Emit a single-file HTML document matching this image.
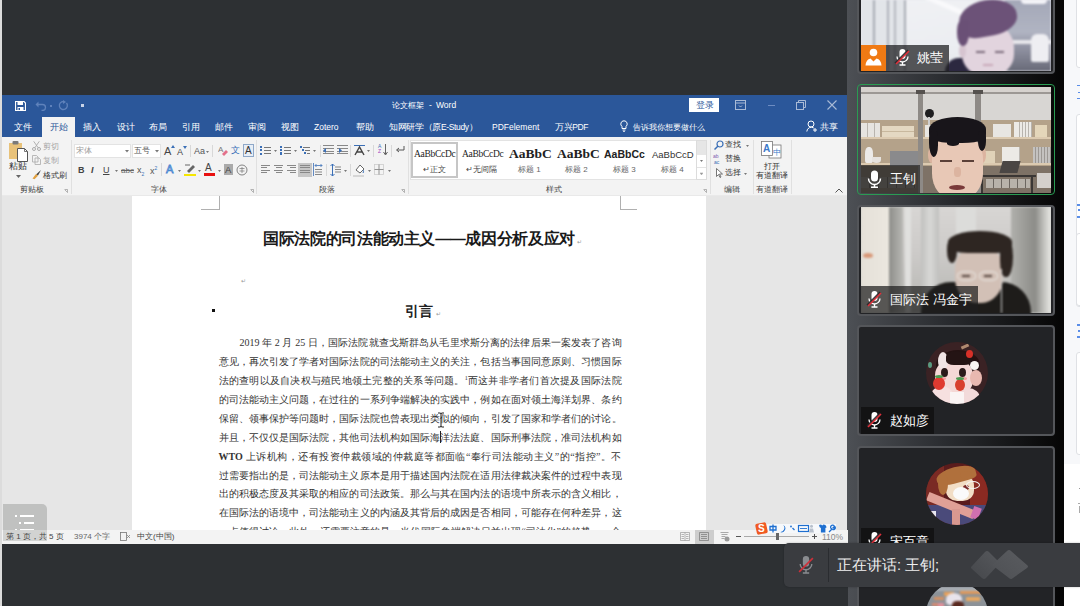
<!DOCTYPE html>
<html><head><meta charset="utf-8">
<style>
*{margin:0;padding:0;box-sizing:border-box}
html,body{width:1080px;height:606px;overflow:hidden;background:#2d3033;font-family:"Liberation Sans",sans-serif;position:relative}
.a{position:absolute}
.t{position:absolute;white-space:nowrap;line-height:1}
#leftstrip{left:0;top:0;width:2px;height:606px;background:#dcdcdc}
#topdark{left:2px;top:0;width:845px;height:95px;background:#2d3033}
#title{left:2px;top:95px;width:846px;height:42px;background:#2b579a}
#ribbon{left:2px;top:137px;width:846px;height:59px;background:#f3f3f3;border-bottom:1px solid #e9e9e9}
#docbg{left:2px;top:196px;width:846px;height:334px;background:#e6e6e6}
#page{left:132px;top:196px;width:574px;height:334px;background:#fff}
#status{left:2px;top:530px;width:846px;height:14px;background:#f3f3f3;z-index:5}
#botdark{left:2px;top:544px;width:846px;height:62px;background:#2d3033;z-index:5}
#panel{left:847px;top:0;width:217px;height:606px;background:linear-gradient(90deg,#4d5055 0%,#2a2c30 45%,#050505 100%)}
#rstrip{left:1064px;top:0;width:16px;height:606px;background:#f7f8fa}
.wt{color:#fff;font-size:9px}
.rt{color:#333;font-size:8px}
.tile{position:absolute;border:2.5px solid #54565a;border-radius:4px;background:#222326;overflow:hidden}
.jl{position:absolute;white-space:nowrap;font-family:"Liberation Serif",serif;font-size:10px;line-height:12px;height:12px;color:#333;text-align:justify;text-align-last:justify}
.jl sup{font-size:6px;vertical-align:4px;line-height:0}
</style></head><body>
<div id="leftstrip" class="a"></div>
<div id="topdark" class="a"></div>
<div id="title" class="a"></div>
<div id="ribbon" class="a"></div>
<div id="docbg" class="a"></div>
<div id="page" class="a"></div>
<div id="status" class="a"></div>
<div id="botdark" class="a"></div>
<div id="panel" class="a"></div>
<div id="rstrip" class="a"></div>

<!-- title bar -->
<svg class="a" style="left:15px;top:101px" width="11" height="10" viewBox="0 0 11 10"><path d="M0.5 0.5h8.5l1.5 1.5v7.5h-10z" fill="none" stroke="#fff" stroke-width="1.2"/><rect x="2.5" y="1" width="5.5" height="3" fill="#fff"/><rect x="2.5" y="6" width="6" height="3.5" fill="#fff"/><rect x="3.5" y="7" width="1.5" height="2" fill="#2b579a"/></svg>
<svg class="a" style="left:35px;top:100px" width="12" height="11" viewBox="0 0 12 11"><path d="M2 4.5h5.5a3 3 0 0 1 0 6h-1" fill="none" stroke="#5f82bb" stroke-width="1.3"/><path d="M0.5 4.5l3-3v6z" fill="#5f82bb"/></svg>
<div class="a" style="left:50px;top:105px;width:2px;height:2px;background:#5f82bb"></div>
<svg class="a" style="left:58px;top:100px" width="11" height="11" viewBox="0 0 11 11"><path d="M8.5 3a4 4 0 1 1-3-1.5" fill="none" stroke="#5f82bb" stroke-width="1.3"/><path d="M5 0v4l3-2z" fill="#5f82bb"/></svg>
<div class="a" style="left:81px;top:104px;width:3px;height:3px;background:#c9d4e8"></div>
<div class="t wt" style="left:392px;top:101px;font-size:8.3px;color:#fff">论文框架</div><div class="t wt" style="left:429px;top:101px;font-size:8.5px;color:#fff">-</div><div class="t wt" style="left:436px;top:101px;font-size:8.5px;color:#fff">Word</div>
<div class="a" style="left:689px;top:98px;width:30px;height:14px;background:#fff"></div>
<div class="t" style="left:696px;top:101px;font-size:8.5px;color:#2b579a">登录</div>
<svg class="a" style="left:735px;top:100px" width="11" height="10" viewBox="0 0 11 10"><rect x="0.5" y="0.5" width="10" height="9" fill="none" stroke="#a9bad6" stroke-width="1"/><line x1="0.5" y1="3" x2="10.5" y2="3" stroke="#a9bad6"/><path d="M4 5.5l1.5 1.5 1.5-1.5" fill="none" stroke="#a9bad6"/></svg>
<div class="a" style="left:768px;top:105px;width:7px;height:1px;background:#6d8cc2"></div>
<svg class="a" style="left:796px;top:100px" width="10" height="10" viewBox="0 0 10 10"><rect x="0.5" y="2.5" width="7" height="7" fill="none" stroke="#a9bad6"/><path d="M2.5 2.5v-2h7v7h-2" fill="none" stroke="#a9bad6"/></svg>
<svg class="a" style="left:827px;top:100px" width="10" height="10" viewBox="0 0 10 10"><path d="M0.5 0.5l9 9M9.5 0.5l-9 9" stroke="#a9bad6" stroke-width="1.1"/></svg>
<!-- tabs -->
<div class="a" style="left:42px;top:117px;width:33px;height:20px;background:#f3f3f3"></div>
<div class="t wt" style="left:14px;top:123px;font-size:8.5px">文件</div>
<div class="t" style="left:50px;top:123px;font-size:8.5px;color:#2b579a">开始</div>
<div class="t wt" style="left:83px;top:123px;font-size:8.5px">插入</div>
<div class="t wt" style="left:117px;top:123px;font-size:8.5px">设计</div>
<div class="t wt" style="left:149px;top:123px;font-size:8.5px">布局</div>
<div class="t wt" style="left:182px;top:123px;font-size:8.5px">引用</div>
<div class="t wt" style="left:215px;top:123px;font-size:8.5px">邮件</div>
<div class="t wt" style="left:248px;top:123px;font-size:8.5px">审阅</div>
<div class="t wt" style="left:281px;top:123px;font-size:8.5px">视图</div>
<div class="t wt" style="left:314px;top:123px;font-size:8.5px">Zotero</div>
<div class="t wt" style="left:356px;top:123px;font-size:8.5px">帮助</div>
<div class="t wt" style="left:389px;top:123px;font-size:8.5px"><span style="letter-spacing:-0.35px">知网研学（原E-Study）</span></div>
<div class="t wt" style="left:492px;top:123px;font-size:8.5px">PDFelement</div>
<div class="t wt" style="left:555px;top:123px;font-size:8.5px"><span style="letter-spacing:-0.4px">万兴PDF</span></div>
<svg class="a" style="left:620px;top:120px" width="8" height="12" viewBox="0 0 8 12"><path d="M4 0.8a3.2 3.2 0 0 0-2 5.7v2h4v-2a3.2 3.2 0 0 0-2-5.7z" fill="none" stroke="#fff" stroke-width="1"/><path d="M2.5 10h3M3 11.3h2" stroke="#fff" stroke-width="0.9"/></svg>
<div class="t wt" style="left:632.5px;top:123.5px;font-size:7.9px">告诉我你想要做什么</div>
<svg class="a" style="left:806px;top:120px" width="12" height="12" viewBox="0 0 12 12"><circle cx="5" cy="4" r="3" fill="none" stroke="#fff" stroke-width="1"/><path d="M0.8 11.5a4.5 4.5 0 0 1 7-3.5" fill="none" stroke="#fff" stroke-width="1"/><path d="M9 8v4M7 10h4" stroke="#fff" stroke-width="1"/></svg>
<div class="t wt" style="left:820px;top:123px;font-size:8.5px">共享</div>

<!-- ribbon: clipboard -->
<svg class="a" style="left:8px;top:140px" width="22" height="22" viewBox="0 0 22 22"><rect x="1" y="3" width="13" height="16" fill="#e8c27a"/><rect x="4.5" y="1" width="6" height="3.5" rx="1" fill="#7a7a7a"/><path d="M9.5 8.5h7l3 3v10h-10z" fill="#fff" stroke="#555" stroke-width="1"/><path d="M16.5 8.5v3h3" fill="none" stroke="#555" stroke-width="0.8"/></svg>
<div class="t" style="left:9px;top:162px;font-size:8.5px;color:#333">粘贴</div>
<svg class="a" style="left:16px;top:175px" width="5" height="3" viewBox="0 0 5 3"><path d="M0 0h5l-2.5 3z" fill="#666"/></svg>
<svg class="a" style="left:32px;top:141px" width="9" height="10" viewBox="0 0 9 10"><circle cx="2" cy="8" r="1.5" fill="none" stroke="#aaa"/><circle cx="7" cy="8" r="1.5" fill="none" stroke="#aaa"/><path d="M2.8 6.8l4.5-6.5M6.2 6.8l-4.5-6.5" stroke="#aaa" stroke-width="0.9"/></svg>
<div class="t" style="left:43px;top:142px;font-size:8.3px;color:#a8a8a8">剪切</div>
<svg class="a" style="left:32px;top:155px" width="9" height="10" viewBox="0 0 9 10"><path d="M0.5 0.5h4l1.5 1.5v5h-5.5z M3 3h4l1.5 1.5v5h-5.5z" fill="#f3f3f3" stroke="#aaa" stroke-width="0.8"/></svg>
<div class="t" style="left:43px;top:156px;font-size:8.3px;color:#a8a8a8">复制</div>
<svg class="a" style="left:32px;top:170px" width="10" height="10" viewBox="0 0 10 10"><path d="M4 4.5l5-4.5-3 5.5z" fill="#444"/><path d="M0.5 8.5l3.5-4.5 2 1.8-3.5 3.5z" fill="#e0a040"/></svg>
<div class="t" style="left:43px;top:171px;font-size:8.3px;color:#333">格式刷</div>
<div class="t" style="left:20px;top:186px;font-size:8px;color:#444">剪贴板</div>
<svg class="a" style="left:64px;top:189px" width="4" height="4" viewBox="0 0 4 4"><path d="M0.5 0.5h3v3M1 1l2.5 2.5" fill="none" stroke="#888" stroke-width="0.6"/></svg>
<div class="a" style="left:71px;top:140px;width:1px;height:54px;background:#e0e0e0"></div>
<!-- font group -->
<div class="a" style="left:74px;top:144px;width:57px;height:14px;background:#fff;border:1px solid #e3e3e3"></div>
<div class="t" style="left:76px;top:147px;font-size:8px;color:#999">宋体</div>
<svg class="a" style="left:125px;top:150px" width="4" height="3" viewBox="0 0 4 3"><path d="M0 0h4l-2 2.5z" fill="#777"/></svg>
<div class="a" style="left:132px;top:144px;width:29px;height:14px;background:#fff;border:1px solid #e3e3e3"></div>
<div class="t" style="left:134px;top:147px;font-size:8px;color:#555">五号</div>
<svg class="a" style="left:155px;top:150px" width="4" height="3" viewBox="0 0 4 3"><path d="M0 0h4l-2 2.5z" fill="#777"/></svg>
<div class="t" style="left:164px;top:146px;font-size:11px;color:#444">A</div>
<svg class="a" style="left:171px;top:145px" width="4" height="3" viewBox="0 0 4 3"><path d="M0 3l2-3 2 3z" fill="#3b6fb6"/></svg>
<div class="t" style="left:177px;top:148px;font-size:9px;color:#444">A</div>
<svg class="a" style="left:183px;top:146px" width="4" height="3" viewBox="0 0 4 3"><path d="M0 0h4l-2 3z" fill="#3b6fb6"/></svg>
<div class="a" style="left:190px;top:145px;width:1px;height:12px;background:#d8d8d8"></div>
<div class="t" style="left:194px;top:147px;font-size:9px;color:#555">Aa</div>
<svg class="a" style="left:206px;top:151px" width="3" height="2" viewBox="0 0 3 2"><path d="M0 0h3l-1.5 2z" fill="#777"/></svg>
<div class="a" style="left:212px;top:145px;width:1px;height:12px;background:#d8d8d8"></div>
<svg class="a" style="left:218px;top:145px" width="10" height="11" viewBox="0 0 10 11"><text x="0" y="7" font-size="8" fill="#777" font-family="Liberation Sans">A</text><path d="M4 9l4-4 2 2-4 4z" fill="#e3708a"/></svg>
<div class="t" style="left:231px;top:146px;font-size:9px;color:#3a6fb8">文</div>
<div class="a" style="left:243px;top:144px;width:11px;height:13px;border:1px solid #8fa8c8;background:#e8eef6"></div>
<div class="t" style="left:245px;top:146px;font-size:10px;color:#333">A</div>
<div class="t" style="left:78px;top:166px;font-size:9px;color:#444;font-weight:bold">B</div>
<div class="t" style="left:91px;top:166px;font-size:9px;color:#444;font-style:italic;font-weight:bold">I</div>
<div class="t" style="left:103px;top:166px;font-size:9px;color:#444;text-decoration:underline">U</div>
<svg class="a" style="left:115px;top:170px" width="3" height="2" viewBox="0 0 3 2"><path d="M0 0h3l-1.5 2z" fill="#777"/></svg>
<div class="t" style="left:121px;top:167px;font-size:8px;color:#666;text-decoration:line-through">abc</div>
<div class="t" style="left:137px;top:166px;font-size:9px;color:#555">x<sub style="font-size:5px;color:#3b6fb6">2</sub></div>
<div class="t" style="left:150px;top:166px;font-size:9px;color:#555">x<sup style="font-size:5px;color:#3b6fb6">2</sup></div>
<div class="a" style="left:161px;top:163px;width:1px;height:13px;background:#d8d8d8"></div>
<div class="t" style="left:166px;top:164px;font-size:11px;color:#fff;-webkit-text-stroke:0.8px #4a86d0">A</div>
<svg class="a" style="left:178px;top:170px" width="3" height="2" viewBox="0 0 3 2"><path d="M0 0h3l-1.5 2z" fill="#777"/></svg>
<svg class="a" style="left:184px;top:163px" width="12" height="13" viewBox="0 0 12 13"><path d="M3 8l6-6 2 2-6 6z" fill="#666"/><path d="M1 2h5" stroke="#666"/><rect x="0" y="11" width="12" height="2" fill="#f5e600"/></svg>
<svg class="a" style="left:198px;top:170px" width="3" height="2" viewBox="0 0 3 2"><path d="M0 0h3l-1.5 2z" fill="#777"/></svg>
<div class="t" style="left:205px;top:163px;font-size:10px;color:#444">A</div>
<div class="a" style="left:204px;top:173px;width:11px;height:2.5px;background:#e81010"></div>
<svg class="a" style="left:218px;top:170px" width="3" height="2" viewBox="0 0 3 2"><path d="M0 0h3l-1.5 2z" fill="#777"/></svg>
<div class="a" style="left:224px;top:164px;width:9px;height:11px;background:#aaa"></div>
<div class="t" style="left:225px;top:165px;font-size:9.5px;color:#444">A</div>
<svg class="a" style="left:236px;top:164px" width="12" height="12" viewBox="0 0 12 12"><circle cx="6" cy="6" r="5" fill="none" stroke="#777" stroke-width="0.9"/><path d="M3.5 4.5h5M6 3v6M3.5 7h5" stroke="#777" stroke-width="0.7"/></svg>
<div class="t" style="left:151px;top:186px;font-size:8px;color:#444">字体</div>
<svg class="a" style="left:250px;top:189px" width="4" height="4" viewBox="0 0 4 4"><path d="M0.5 0.5h3v3M1 1l2.5 2.5" fill="none" stroke="#888" stroke-width="0.6"/></svg>
<div class="a" style="left:256px;top:140px;width:1px;height:54px;background:#e0e0e0"></div>
<div class="a" style="left:260px;top:146.0px;width:2px;height:2px;background:#3b6fb6"></div><div class="a" style="left:264px;top:146.5px;width:7px;height:1px;background:#777"></div><div class="a" style="left:260px;top:149.3px;width:2px;height:2px;background:#3b6fb6"></div><div class="a" style="left:264px;top:149.8px;width:7px;height:1px;background:#777"></div><div class="a" style="left:260px;top:152.6px;width:2px;height:2px;background:#3b6fb6"></div><div class="a" style="left:264px;top:153.1px;width:7px;height:1px;background:#777"></div><svg class="a" style="left:274px;top:150px" width="3" height="2" viewBox="0 0 3 2"><path d="M0 0h3l-1.5 2z" fill="#777"/></svg><div class="a" style="left:280px;top:145.5px;width:2px;height:2.5px;background:#3b6fb6"></div><div class="a" style="left:284px;top:146.5px;width:7px;height:1px;background:#777"></div><div class="a" style="left:280px;top:148.8px;width:2px;height:2.5px;background:#3b6fb6"></div><div class="a" style="left:284px;top:149.8px;width:7px;height:1px;background:#777"></div><div class="a" style="left:280px;top:152.1px;width:2px;height:2.5px;background:#3b6fb6"></div><div class="a" style="left:284px;top:153.1px;width:7px;height:1px;background:#777"></div><svg class="a" style="left:294px;top:150px" width="3" height="2" viewBox="0 0 3 2"><path d="M0 0h3l-1.5 2z" fill="#777"/></svg><div class="a" style="left:300px;top:145.5px;width:2px;height:2px;background:#3b6fb6"></div><div class="a" style="left:303px;top:146.5px;width:7px;height:1px;background:#777"></div><div class="a" style="left:302px;top:148.8px;width:2px;height:2px;background:#3b6fb6"></div><div class="a" style="left:305px;top:149.8px;width:5px;height:1px;background:#777"></div><div class="a" style="left:304px;top:152.1px;width:2px;height:2px;background:#3b6fb6"></div><div class="a" style="left:307px;top:153.1px;width:3px;height:1px;background:#777"></div><svg class="a" style="left:313px;top:150px" width="3" height="2" viewBox="0 0 3 2"><path d="M0 0h3l-1.5 2z" fill="#777"/></svg><div class="a" style="left:320px;top:145px;width:1px;height:12px;background:#d8d8d8"></div><div class="a" style="left:323px;top:145.0px;width:11px;height:1px;background:#888"></div><div class="a" style="left:323px;top:147.8px;width:11px;height:1px;background:#888"></div><div class="a" style="left:323px;top:150.6px;width:11px;height:1px;background:#888"></div><div class="a" style="left:323px;top:153.4px;width:11px;height:1px;background:#888"></div><div class="a" style="left:337px;top:145.0px;width:11px;height:1px;background:#888"></div><div class="a" style="left:337px;top:147.8px;width:11px;height:1px;background:#888"></div><div class="a" style="left:337px;top:150.6px;width:11px;height:1px;background:#888"></div><div class="a" style="left:337px;top:153.4px;width:11px;height:1px;background:#888"></div><svg class="a" style="left:323px;top:148px" width="6" height="5" viewBox="0 0 6 5"><path d="M0 2.5l3-2.5v5z" fill="#3b6fb6"/></svg><svg class="a" style="left:337px;top:148px" width="6" height="5" viewBox="0 0 6 5"><path d="M5 2.5l-3-2.5v5z" fill="#3b6fb6"/></svg><div class="a" style="left:350px;top:145px;width:1px;height:12px;background:#d8d8d8"></div><svg class="a" style="left:353px;top:144px" width="13" height="12" viewBox="0 0 13 12"><path d="M1 1.5h11" stroke="#3b6fb6" stroke-width="1"/><path d="M2 11l4.5-8 4.5 8M4 8h5" fill="none" stroke="#444" stroke-width="1.4"/></svg><svg class="a" style="left:367px;top:150px" width="3" height="2" viewBox="0 0 3 2"><path d="M0 0h3l-1.5 2z" fill="#777"/></svg><div class="a" style="left:373px;top:145px;width:1px;height:12px;background:#d8d8d8"></div><div class="t" style="left:378px;top:144px;font-size:5px;color:#3b6fb6;line-height:5px">A<br><span style="color:#a040c0">Z</span></div><svg class="a" style="left:383px;top:144px" width="5" height="12" viewBox="0 0 5 12"><path d="M2.5 0v10M0.5 8l2 3 2-3" fill="none" stroke="#555" stroke-width="0.9"/></svg><div class="a" style="left:391px;top:145px;width:1px;height:12px;background:#d8d8d8"></div><svg class="a" style="left:395px;top:146px" width="10" height="9" viewBox="0 0 10 9"><path d="M9 0v4h-7M4 2l-2.5 2 2.5 2" fill="none" stroke="#555" stroke-width="1"/></svg><div class="a" style="left:261px;top:164.5px;width:9px;height:1.2px;background:#888"></div><div class="a" style="left:261px;top:167.1px;width:6px;height:1.2px;background:#888"></div><div class="a" style="left:261px;top:169.7px;width:9px;height:1.2px;background:#888"></div><div class="a" style="left:261px;top:172.3px;width:6px;height:1.2px;background:#888"></div><div class="a" style="left:274px;top:164.5px;width:9px;height:1.2px;background:#888"></div><div class="a" style="left:275.5px;top:167.1px;width:6px;height:1.2px;background:#888"></div><div class="a" style="left:274px;top:169.7px;width:9px;height:1.2px;background:#888"></div><div class="a" style="left:275.5px;top:172.3px;width:6px;height:1.2px;background:#888"></div><div class="a" style="left:287px;top:164.5px;width:9px;height:1.2px;background:#888"></div><div class="a" style="left:290px;top:167.1px;width:6px;height:1.2px;background:#888"></div><div class="a" style="left:287px;top:169.7px;width:9px;height:1.2px;background:#888"></div><div class="a" style="left:290px;top:172.3px;width:6px;height:1.2px;background:#888"></div><div class="a" style="left:298px;top:163px;width:14px;height:14px;background:#c6c6c6"></div><div class="a" style="left:300px;top:164.5px;width:10px;height:1.2px;background:#888"></div><div class="a" style="left:300px;top:167.1px;width:10px;height:1.2px;background:#888"></div><div class="a" style="left:300px;top:169.7px;width:10px;height:1.2px;background:#888"></div><div class="a" style="left:300px;top:172.3px;width:10px;height:1.2px;background:#888"></div><svg class="a" style="left:313px;top:163px" width="10" height="13" viewBox="0 0 10 13"><path d="M0.5 0v13" stroke="#3b6fb6" stroke-width="0.8"/><path d="M2 2.5h7M3.5 1l-1.5 1.5 1.5 1.5M7.5 1l1.5 1.5-1.5 1.5" fill="none" stroke="#3b6fb6" stroke-width="0.8"/><path d="M2 6.5h7M2 9h7M2 11.5h7" stroke="#888" stroke-width="1.1"/></svg><div class="a" style="left:326px;top:164px;width:1px;height:12px;background:#d8d8d8"></div><svg class="a" style="left:330px;top:163px" width="11" height="14" viewBox="0 0 11 14"><path d="M2.5 1v12M0.5 3l2-2 2 2M0.5 11l2 2 2-2" fill="none" stroke="#3b6fb6" stroke-width="1"/><path d="M5 4h6M5 6.5h6M5 9h6" stroke="#888" stroke-width="1.1"/></svg><svg class="a" style="left:344px;top:170px" width="3" height="2" viewBox="0 0 3 2"><path d="M0 0h3l-1.5 2z" fill="#777"/></svg><div class="a" style="left:350px;top:164px;width:1px;height:12px;background:#d8d8d8"></div><svg class="a" style="left:353px;top:163px" width="12" height="14" viewBox="0 0 12 14"><path d="M3 7l4-5 4 4-4 4z" fill="#fff" stroke="#555" stroke-width="0.9"/><path d="M10 7q1 2 0 3" stroke="#3b6fb6" fill="none"/><path d="M0 13h11" stroke="#ccc" stroke-width="1.5"/></svg><svg class="a" style="left:368px;top:170px" width="3" height="2" viewBox="0 0 3 2"><path d="M0 0h3l-1.5 2z" fill="#777"/></svg><svg class="a" style="left:374px;top:164px" width="10" height="11" viewBox="0 0 10 11"><rect x="0.5" y="0.5" width="9" height="10" fill="none" stroke="#ccc" stroke-width="0.8"/><path d="M5 0.5v10M0.5 5.5h9" stroke="#888" stroke-width="0.9"/></svg><svg class="a" style="left:388px;top:170px" width="3" height="2" viewBox="0 0 3 2"><path d="M0 0h3l-1.5 2z" fill="#777"/></svg><div class="t" style="left:319px;top:186px;font-size:8px;color:#444">段落</div><svg class="a" style="left:401px;top:189px" width="4" height="4" viewBox="0 0 4 4"><path d="M0.5 0.5h3v3M1 1l2.5 2.5" fill="none" stroke="#888" stroke-width="0.6"/></svg><div class="a" style="left:408px;top:140px;width:1px;height:54px;background:#e0e0e0"></div><div class="a" style="left:410px;top:140px;width:297px;height:40px;background:#fff;border:1px solid #e3e3e3"></div><div class="a" style="left:411px;top:142px;width:47px;height:36px;border:2px solid #c6c6c6;background:#fff"></div><div class="t" style="left:414px;top:150px;font-size:9.5px;color:#222;font-family:'Liberation Serif',serif;letter-spacing:-0.3px">AaBbCcDc</div><div class="t" style="left:423px;top:166px;font-size:8px;color:#444">↵正文</div><div class="t" style="left:462px;top:150px;font-size:9.5px;color:#222;font-family:'Liberation Serif',serif;letter-spacing:-0.3px">AaBbCcDc</div><div class="t" style="left:466px;top:166px;font-size:8px;color:#444">↵无间隔</div><div class="t" style="left:509px;top:147px;font-size:13.5px;color:#222;font-weight:bold;font-family:'Liberation Serif',serif">AaBbC</div><div class="t" style="left:518px;top:166px;font-size:8px;color:#666">标题 1</div><div class="t" style="left:557px;top:147px;font-size:13.5px;color:#222;font-weight:bold;font-family:'Liberation Serif',serif">AaBbC</div><div class="t" style="left:565px;top:166px;font-size:8px;color:#666">标题 2</div><div class="t" style="left:604px;top:149px;font-size:10.5px;color:#222;font-weight:bold">AaBbCc</div><div class="t" style="left:613px;top:166px;font-size:8px;color:#666">标题 3</div><div class="t" style="left:652px;top:150px;font-size:9.5px;color:#333">AaBbCcD</div><div class="t" style="left:661px;top:166px;font-size:8px;color:#666">标题 4</div><div class="a" style="left:696px;top:140px;width:11px;height:40px;background:#fff;border:1px solid #dcdcdc"></div><div class="a" style="left:697px;top:141px;width:9px;height:14px;background:#e6e6e6"></div><div class="a" style="left:697px;top:167px;width:9px;height:1px;background:#e3e3e3"></div><svg class="a" style="left:700px;top:160px" width="3" height="2" viewBox="0 0 3 2"><path d="M0 0h3l-1.5 2z" fill="#777"/></svg><svg class="a" style="left:700px;top:172px" width="3" height="3" viewBox="0 0 3 3"><path d="M0 0h3M0 1h3l-1.5 2z" fill="#999" stroke="#999" stroke-width="0.3"/></svg><div class="t" style="left:546px;top:186px;font-size:8px;color:#444">样式</div><svg class="a" style="left:703px;top:189px" width="4" height="4" viewBox="0 0 4 4"><path d="M0.5 0.5h3v3M1 1l2.5 2.5" fill="none" stroke="#888" stroke-width="0.6"/></svg><div class="a" style="left:710px;top:140px;width:1px;height:54px;background:#e0e0e0"></div><svg class="a" style="left:714px;top:140px" width="10" height="10" viewBox="0 0 10 10"><circle cx="6" cy="4" r="3" fill="none" stroke="#3b6fb6" stroke-width="1.2"/><path d="M4 6l-3.5 3.5" stroke="#3b6fb6" stroke-width="1.5"/></svg><div class="t" style="left:725px;top:141px;font-size:8px;color:#333">查找</div><svg class="a" style="left:746px;top:145px" width="3" height="2" viewBox="0 0 3 2"><path d="M0 0h3l-1.5 2z" fill="#777"/></svg><svg class="a" style="left:713px;top:154px" width="10" height="10" viewBox="0 0 10 10"><text x="0" y="4" font-size="5" fill="#8060b0" font-family="Liberation Sans">ab</text><text x="1" y="9.5" font-size="5" fill="#3b6fb6" font-family="Liberation Sans">ac</text></svg><div class="t" style="left:725px;top:155px;font-size:8px;color:#333">替换</div><svg class="a" style="left:716px;top:168px" width="7" height="10" viewBox="0 0 7 10"><path d="M0.5 0.5v8l2-2 1.5 3 1-0.5-1.5-3h3z" fill="#fff" stroke="#555" stroke-width="0.8"/></svg><div class="t" style="left:725px;top:169px;font-size:8px;color:#333">选择</div><svg class="a" style="left:744px;top:173px" width="3" height="2" viewBox="0 0 3 2"><path d="M0 0h3l-1.5 2z" fill="#777"/></svg><div class="t" style="left:724px;top:186px;font-size:8px;color:#444">编辑</div><div class="a" style="left:753px;top:140px;width:1px;height:54px;background:#e0e0e0"></div><svg class="a" style="left:761px;top:141px" width="21" height="18" viewBox="0 0 21 18"><rect x="8" y="4" width="12" height="13" fill="#fff" stroke="#777" stroke-width="0.8"/><rect x="0.5" y="0.5" width="11" height="14" fill="#fff" stroke="#777" stroke-width="0.8"/><text x="2" y="11" font-size="10" fill="#3b78c8" font-family="Liberation Sans" font-weight="bold">A</text><text x="12" y="14" font-size="8" fill="#3b78c8">中</text></svg><div class="t" style="left:764px;top:163px;font-size:8px;color:#333">打开</div><div class="t" style="left:756px;top:172px;font-size:8px;color:#333">有道翻译</div><div class="t" style="left:756px;top:186px;font-size:8px;color:#444">有道翻译</div><div class="a" style="left:791px;top:140px;width:1px;height:54px;background:#e0e0e0"></div><svg class="a" style="left:835px;top:188px" width="8" height="5" viewBox="0 0 8 5"><path d="M0.5 4.5l3.5-3.5 3.5 3.5" fill="none" stroke="#555" stroke-width="1"/></svg>
<!-- document -->
<div class="a" style="left:219px;top:196px;width:1px;height:13px;background:#b0b0b0"></div>
<div class="a" style="left:201px;top:209px;width:19px;height:1px;background:#b0b0b0"></div>
<div class="a" style="left:620px;top:196px;width:1px;height:13px;background:#b0b0b0"></div>
<div class="a" style="left:620px;top:209px;width:17px;height:1px;background:#b0b0b0"></div>
<div class="t" style="left:132px;width:574px;text-align:center;top:231px;font-size:15.5px;letter-spacing:-0.35px;font-weight:bold;color:#1a1a1a">国际法院的司法能动主义——成因分析及应对</div>
<div class="t" style="left:577px;top:239px;font-size:6px;color:#999">↵</div>
<div class="t" style="left:241px;top:278px;font-size:6px;color:#999">↵</div>
<div class="a" style="left:212px;top:309px;width:3px;height:3px;background:#111"></div>
<div class="t" style="left:132px;width:574px;text-align:center;top:304px;font-size:14px;font-weight:bold;color:#222">引言</div>
<div class="t" style="left:436px;top:311px;font-size:6px;color:#999">↵</div>
<div class="jl" style="left:239.5px;top:337.2px;width:382.0px">2019 年 2 月 25 日，国际法院就查戈斯群岛从毛里求斯分离的法律后果一案发表了咨询</div>
<div class="jl" style="left:218.5px;top:356.1px;width:403.0px">意见，再次引发了学者对国际法院的司法能动主义的关注，包括当事国同意原则、习惯国际</div>
<div class="jl" style="left:218.5px;top:375.0px;width:403.0px">法的查明以及自决权与殖民地领土完整的关系等问题。<sup>1</sup>而这并非学者们首次提及国际法院</div>
<div class="jl" style="left:218.5px;top:393.9px;width:403.0px">的司法能动主义问题，在过往的一系列争端解决的实践中，例如在面对领土海洋划界、条约</div>
<div class="jl" style="left:218.5px;top:412.8px;width:403.0px">保留、领事保护等问题时，国际法院也曾表现出类似的倾向，引发了国家和学者们的讨论。</div>
<div class="jl" style="left:218.5px;top:431.7px;width:403.0px">并且，不仅仅是国际法院，其他司法机构如国际海洋法法庭、国际刑事法院，准司法机构如</div>
<div class="jl" style="left:218.5px;top:450.6px;width:403.0px"><b>WTO</b> 上诉机构，还有投资仲裁领域的仲裁庭等都面临“奉行司法能动主义”的“指控”。不</div>
<div class="jl" style="left:218.5px;top:469.5px;width:403.0px">过需要指出的是，司法能动主义原本是用于描述国内法院在适用法律裁决案件的过程中表现</div>
<div class="jl" style="left:218.5px;top:488.4px;width:403.0px">出的积极态度及其采取的相应的司法政策。那么与其在国内法的语境中所表示的含义相比，</div>
<div class="jl" style="left:218.5px;top:507.3px;width:403.0px">在国际法的语境中，司法能动主义的内涵及其背后的成因是否相同，可能存在何种差异，这</div>
<div class="jl" style="left:218.5px;top:526.2px;width:403.0px">一点值得讨论。此外，还需要注意的是，当代国际争端解决日益出现“司法化”的趋势，一个</div>


<div class="a" style="left:440px;top:430.5px;width:1px;height:12.5px;background:#222"></div>
<svg class="a" style="left:436.5px;top:412px" width="8" height="16" viewBox="0 0 8 16"><path d="M1 1h2.5l0.5 1 0.5-1h2.5M4 2v12M1 15h2.5l0.5-1 0.5 1h2.5" fill="none" stroke="#222" stroke-width="1"/></svg>
<!-- status bar content -->
<div class="a" style="left:3px;top:504px;width:44px;height:26px;background:#c0c1c0;border-radius:0 5px 0 0;z-index:6"></div>
<div class="a" style="left:3px;top:530px;width:44px;height:11px;background:#d2d3d2;z-index:6"></div>
<div class="a" style="left:15px;top:514.5px;width:2px;height:2px;background:#fff;z-index:6"></div>
<div class="a" style="left:20px;top:514.5px;width:14px;height:2px;background:#fff;z-index:6"></div>
<div class="a" style="left:18.5px;top:522px;width:2px;height:2px;background:#fff;z-index:6"></div>
<div class="a" style="left:24px;top:522px;width:10px;height:2px;background:#fff;z-index:6"></div>
<div class="a" style="left:15px;top:529px;width:2px;height:1px;background:#fff;z-index:6"></div>
<div class="a" style="left:20px;top:529px;width:14px;height:1px;background:#fff;z-index:6"></div>
<div class="t" style="left:6px;top:533px;font-size:8px;color:#444;z-index:7">第 1 页，共 5 页</div>
<div class="t" style="left:74px;top:533px;font-size:8px;color:#666;z-index:6">3974 个字</div>
<svg class="a" style="left:120px;top:532px;z-index:6" width="11" height="9" viewBox="0 0 11 9"><rect x="0.5" y="0.5" width="6" height="8" fill="none" stroke="#777" stroke-width="0.8"/><path d="M7 3l3 3M10 3l-3 3" stroke="#777" stroke-width="0.7"/></svg>
<div class="t" style="left:137px;top:533px;font-size:8px;color:#444;z-index:6">中文(中国)</div>
<svg class="a" style="left:680px;top:532px;z-index:6" width="10" height="9" viewBox="0 0 10 9"><path d="M0.5 0.5h9v8h-9zM5 0.5v8M1.5 2.5h2.5M1.5 4.5h2.5M1.5 6.5h2.5M6 2.5h2.5M6 4.5h2.5M6 6.5h2.5" fill="none" stroke="#999" stroke-width="0.7"/></svg>
<div class="a" style="left:695px;top:530px;width:19px;height:14px;background:#cdcdcd;z-index:6"></div>
<svg class="a" style="left:699px;top:532px;z-index:6" width="10" height="9" viewBox="0 0 10 9"><path d="M0.5 0.5h9v8h-9zM2 2.5h6M2 4.5h6M2 6.5h6" fill="none" stroke="#777" stroke-width="0.7"/></svg>
<svg class="a" style="left:720px;top:532px;z-index:6" width="10" height="10" viewBox="0 0 10 10"><path d="M0.5 0.5h8M1.5 2.5h6M1.5 4.5h4M1.5 6.5h3" fill="none" stroke="#888" stroke-width="0.7"/><circle cx="7" cy="7" r="2.5" fill="#999"/></svg>
<div class="a" style="left:736px;top:536px;width:5px;height:1px;background:#555;z-index:6"></div>
<div class="a" style="left:744px;top:536px;width:65px;height:1px;background:#aaa;z-index:6"></div>
<div class="a" style="left:776px;top:533px;width:3px;height:7px;background:#666;z-index:6"></div>
<div class="a" style="left:812px;top:536px;width:5px;height:1px;background:#555;z-index:6"></div>
<div class="a" style="left:814px;top:534px;width:1px;height:5px;background:#555;z-index:6"></div>
<div class="t" style="left:822px;top:533px;font-size:8.5px;color:#888;z-index:6">110%</div>
<!-- sogou toolbar -->
<div class="a" style="left:765px;top:524px;width:71px;height:9px;background:#f6f8fb;z-index:7"></div>
<div class="a" style="left:756px;top:523px;width:11px;height:11px;background:#f05a22;border-radius:2px;transform:rotate(-12deg);z-index:8"></div>
<div class="t" style="left:758px;top:523.5px;font-size:10px;font-weight:bold;color:#fff;z-index:9">S</div>
<svg class="a" style="left:768px;top:524px;z-index:8" width="70" height="9" viewBox="0 0 70 9">
<path d="M2 2.5h6v3.5h-6z M5 0.5v8" fill="none" stroke="#1e6fd0" stroke-width="1.3"/>
<path d="M15 1a3.5 3.5 0 0 1-3 7a4 4 0 0 0 3-7z" fill="#1e6fd0"/>
<circle cx="23" cy="2.5" r="0.9" fill="#1e6fd0"/><path d="M24.5 4l2 2" stroke="#1e6fd0" stroke-width="1.2"/>
<rect x="30.5" y="1.5" width="10" height="6" fill="none" stroke="#1e6fd0" stroke-width="1.2"/><path d="M32 4.5h7" stroke="#1e6fd0" stroke-width="0.9"/>
<circle cx="43.5" cy="2.3" r="1.5" fill="#b8c0cc"/><path d="M41 8.5h5l-1-4h-3z" fill="#b8c0cc"/>
<path d="M51 1l2-0.5 1.2 1 1.2-1 2 0.5 1.3 2.3-1.3 0.7v4.5h-4.5v-4.5l-1.2-0.7z" fill="#1e6fd0"/>
<path d="M61 8l3.5-3.5M64 5a2 2 0 1 1 2.5-2.5l-1.3 1 0.8 0.8 1.3-1a2 2 0 0 1-2.8 2.2" fill="none" stroke="#1e6fd0" stroke-width="1.3"/>
</svg>

<!-- participant panel -->
<div class="tile" style="left:857px;top:-37px;width:197.5px;height:111px"></div>
<div class="a" style="left:861px;top:0;width:190px;height:71px;overflow:hidden;background:#e6e8ec">
 <div class="a" style="left:0;top:0;width:190px;height:71px;filter:blur(1px)">
  <div class="a" style="left:0;top:0;width:45px;height:71px;background:#e2e5e9"></div>
  <div class="a" style="left:12px;top:0;width:2px;height:71px;background:#a6aab2"></div>
  <div class="a" style="left:26px;top:0;width:2px;height:71px;background:#aeb2ba"></div>
  <div class="a" style="left:33px;top:0;width:2px;height:71px;background:#b6b8c0"></div>
  <div class="a" style="left:43px;top:0;width:2px;height:71px;background:#a8acb4"></div>
  <div class="a" style="left:45px;top:0;width:100px;height:71px;background:linear-gradient(170deg,#f0f1f4 0%,#eceef2 60%,#e2e4e8 100%)"></div>
  <div class="a" style="left:60px;top:12px;width:90px;height:5px;background:rgba(250,250,252,0.9);transform:rotate(24deg)"></div>
  <div class="a" style="left:136px;top:0;width:54px;height:71px;background:linear-gradient(180deg,#a4a8b8 0%,#b0b4c2 45%,#9a9cac 60%,#686a78 100%)"></div>
  <div class="a" style="left:136px;top:40px;width:54px;height:4px;background:#e8e8ec"></div>
  <div class="a" style="left:160px;top:0;width:26px;height:4px;background:#f4f4f8;border-radius:0 0 8px 8px"></div>
  <div class="a" style="left:128px;top:0;width:16px;height:3px;background:#e6e6ee;border-radius:0 0 8px 8px"></div>
  <div class="a" style="left:170px;top:34px;width:18px;height:28px;background:#eeeef2;border-radius:6px 6px 2px 2px"></div>
  <div class="a" style="left:84px;top:58px;width:40px;height:20px;background:#2c2840;border-radius:14px 14px 0 0"></div>
  <div class="a" style="left:101px;top:24px;width:52px;height:52px;background:#e2d4de;border-radius:45% 45% 42% 42%"></div>
  <div class="a" style="left:98px;top:44px;width:7px;height:14px;background:#d6c4d0;border-radius:50%"></div>
  <div class="a" style="left:98px;top:0px;width:58px;height:36px;background:#6c5278;border-radius:50% 50% 45% 30%;transform:rotate(-10deg)"></div>
  <div class="a" style="left:96px;top:20px;width:12px;height:26px;background:#6a5076;border-radius:40% 20% 50% 50%"></div>
  <div class="a" style="left:115px;top:51px;width:9px;height:1.5px;background:#7a6a7a"></div>
  <div class="a" style="left:134px;top:51px;width:9px;height:1.5px;background:#7a6a7a"></div>
  <div class="a" style="left:122px;top:64px;width:10px;height:2px;background:#c8a8b8"></div>
 </div>
</div>
<div class="a" style="left:861px;top:44.5px;width:25px;height:26px;background:#f07a14;z-index:2"></div>
<svg class="a" style="left:864px;top:47px;z-index:3" width="19" height="20" viewBox="0 0 19 20"><circle cx="9.5" cy="5.5" r="3.8" fill="#fff"/><path d="M1.5 18.5q0.5-6 5-7l3 3 3-3q4.5 1 5 7z" fill="#fff"/></svg>
<div class="a" style="left:886px;top:44.5px;width:63px;height:26.5px;background:rgba(34,34,36,0.75);z-index:2"></div>
<svg class="a" style="left:894px;top:48px;z-index:3" width="17" height="18" viewBox="0 0 17 18"><rect x="5.5" y="1" width="6" height="10" rx="3" fill="#fff"/><path d="M3 8.5a5.5 5.5 0 0 0 11 0" fill="none" stroke="#fff" stroke-width="1.3"/><path d="M8.5 14v3M5.5 17h6" stroke="#fff" stroke-width="1.3"/><path d="M1.2 15.2L14.2 2.2" stroke="rgba(40,40,42,0.9)" stroke-width="2"/><path d="M2 16L15 3" stroke="#e0303a" stroke-width="1.6"/></svg>
<div class="t" style="left:917px;top:51px;font-size:13.4px;color:#fff;z-index:3">姚莹</div>

<div class="a" style="left:857px;top:84px;width:198px;height:111px;border:1.7px solid #2a9c52;border-radius:4px"></div>
<div class="a" style="left:861px;top:86.5px;width:190px;height:106px;overflow:hidden;background:#d6d4d0"><div class="a" style="left:0;top:0;width:190px;height:106px;filter:blur(0.7px)">
  <div class="a" style="left:0;top:0;width:190px;height:6px;background:#d6d2ce"></div>
  <div class="a" style="left:0;top:5px;width:190px;height:2px;background:#9c9894"></div>
  <div class="a" style="left:0;top:7px;width:190px;height:27px;background:#d8d6d3"></div>
  <div class="a" style="left:0;top:33px;width:190px;height:73px;background:#b4a28a"></div>
  <div class="a" style="left:0;top:50px;width:190px;height:2.5px;background:#dccab0"></div>
  <div class="a" style="left:0;top:76px;width:190px;height:2.5px;background:#dccab0"></div>
  <div class="a" style="left:0;top:101px;width:190px;height:2px;background:#b8a890"></div>
  <!-- shelf 1 items -->
  <div class="a" style="left:0;top:36px;width:19px;height:14px;background:#e6e4e0"></div>
  <div class="a" style="left:6px;top:36px;width:1px;height:14px;background:#b8b4ae"></div>
  <div class="a" style="left:13px;top:36px;width:1px;height:14px;background:#b8b4ae"></div>
  <div class="a" style="left:21px;top:39px;width:32px;height:11px;background:#e4d8c2"></div>
  <div class="a" style="left:21px;top:44px;width:32px;height:1px;background:#c8b89e"></div>
  <div class="a" style="left:64px;top:38px;width:12px;height:12px;background:#e8e6e2"></div>
  <div class="a" style="left:132px;top:37px;width:18px;height:13px;background:#e8e6e2"></div>
  <div class="a" style="left:153px;top:35px;width:18px;height:15px;background:repeating-linear-gradient(90deg,#eceae6 0 2.5px,#b8b4ae 2.5px 3px)"></div>
  <div class="a" style="left:174px;top:38px;width:12px;height:12px;background:#e4d6ba"></div>
  <!-- shelf 2 items -->
  <div class="a" style="left:4px;top:60px;width:8px;height:16px;background:#eceae8;border-radius:40% 40% 20% 20%"></div>
  <div class="a" style="left:11px;top:70px;width:9px;height:6px;background:#e6e2de;border-radius:0 0 50% 50%"></div>
  <div class="a" style="left:29px;top:64px;width:28px;height:17px;background:#8a8a8c"></div>
  <div class="a" style="left:122px;top:64px;width:12px;height:12px;background:#e0d2b8"></div>
  <div class="a" style="left:141px;top:60px;width:18px;height:16px;background:repeating-linear-gradient(90deg,#eceae6 0 2.5px,#bcb8b2 2.5px 3px)"></div>
  <div class="a" style="left:172px;top:60px;width:18px;height:16px;background:repeating-linear-gradient(90deg,#c4c2c0 0 2.5px,#9c9894 2.5px 3px)"></div>
  <!-- lower -->
  <div class="a" style="left:0;top:79px;width:190px;height:27px;background:#7e7266"></div>
  <div class="a" style="left:140px;top:74px;width:18px;height:12px;background:#4a4644;transform:skewX(-15deg)"></div>
  <div class="a" style="left:115px;top:88px;width:60px;height:2px;background:#3a3634"></div>
  <div class="a" style="left:120px;top:90px;width:2px;height:16px;background:#3a3634"></div>
  <div class="a" style="left:170px;top:90px;width:2px;height:16px;background:#3a3634"></div>
  <div class="a" style="left:125px;top:92px;width:44px;height:9px;background:repeating-linear-gradient(90deg,#b8b2aa 0 7px,#6c6660 7px 8px)"></div>
  <div class="a" style="left:0;top:90px;width:55px;height:11px;background:repeating-linear-gradient(90deg,#8a847c 0 8px,#5c5650 8px 9px)"></div>
  <div class="a" style="left:176px;top:86px;width:14px;height:15px;background:#d4d0cc"></div>
  <!-- poles -->
  <div class="a" style="left:57px;top:3px;width:5px;height:103px;background:#8e8a86"></div>
  <div class="a" style="left:55px;top:3px;width:9px;height:4px;background:#55514e"></div>
  <div class="a" style="left:114px;top:3px;width:6px;height:103px;background:#8e8a86"></div>
  <div class="a" style="left:112px;top:3px;width:10px;height:4px;background:#55514e"></div>
  <div class="a" style="left:64px;top:22px;width:9px;height:9px;background:#1e1e20;border-radius:50%"></div>
  <div class="a" style="left:67px;top:30px;width:2px;height:8px;background:#cfcfcf"></div>
  <!-- head -->
  <div class="a" style="left:67px;top:60px;width:7px;height:16px;background:#dcb4a0;border-radius:50%"></div>
  <div class="a" style="left:118px;top:60px;width:7px;height:16px;background:#dcb4a0;border-radius:50%"></div>
  <div class="a" style="left:71px;top:48px;width:51px;height:64px;background:#e8c8b6;border-radius:38% 38% 40% 40%"></div>
  <div class="a" style="left:68px;top:30px;width:57px;height:24px;background:#18151a;border-radius:50% 50% 30% 30%"></div>
  <div class="a" style="left:68px;top:44px;width:9px;height:26px;background:#18151a;border-radius:30% 20% 50% 60%"></div>
  <div class="a" style="left:117px;top:44px;width:8px;height:20px;background:#18151a;border-radius:20% 30% 50% 50%"></div>
  <div class="a" style="left:76px;top:50px;width:42px;height:6px;background:#18151a;border-radius:0 0 40% 40%"></div>
  <div class="a" style="left:86px;top:54px;width:12px;height:5px;background:#18151a;border-radius:0 0 50% 50%"></div>
  <div class="a" style="left:79px;top:73px;width:12px;height:2px;background:#5a4038"></div>
  <div class="a" style="left:101px;top:73px;width:12px;height:2px;background:#5a4038"></div>
  <div class="a" style="left:93px;top:80px;width:7px;height:10px;background:#dcb4a0;border-radius:40%"></div>
  <div class="a" style="left:88px;top:98px;width:16px;height:5px;background:#7a3a3a;border-radius:50%"></div>
</div></div>
<div class="a" style="left:861px;top:165px;width:59px;height:27.5px;background:rgba(30,30,30,0.65);z-index:2"></div>
<svg class="a" style="left:866px;top:170px;z-index:3" width="17" height="18" viewBox="0 0 17 18"><rect x="5" y="0.5" width="7" height="11" rx="3.5" fill="#fff"/><path d="M2.5 8.5a6 6 0 0 0 12 0" fill="none" stroke="#fff" stroke-width="1.5"/><path d="M8.5 14.5v3M5 17.3h7" stroke="#fff" stroke-width="1.5"/></svg>
<div class="t" style="left:890px;top:172px;font-size:13.4px;color:#fff;z-index:3">王钊</div>

<div class="tile" style="left:857px;top:204.5px;width:197.5px;height:111px"></div>
<div class="a" style="left:861px;top:207px;width:190px;height:106px;overflow:hidden;background:#c6c6c4"><div class="a" style="left:0;top:0;width:190px;height:106px;filter:blur(1.3px)">
  <div class="a" style="left:0;top:0;width:30px;height:106px;background:linear-gradient(90deg,#e4e0d8,#ece8e0)"></div>
  <div class="a" style="left:28px;top:0;width:162px;height:106px;background:linear-gradient(180deg,#d8d6d4 0%,#cccac8 45%,#b4b4b0 100%)"></div>
  <div class="a" style="left:28px;top:0;width:14px;height:106px;background:linear-gradient(90deg,#8e8e8a,#b8b8b4)"></div>
  <div class="a" style="left:44px;top:0;width:6px;height:106px;background:#e0e0de"></div>
  <div class="a" style="left:60px;top:0;width:18px;height:106px;background:linear-gradient(90deg,#c0c0be,#d8d8d6,#c0c0be)"></div>
  <div class="a" style="left:95px;top:0;width:20px;height:40px;background:#dcdcda"></div>
  <div class="a" style="left:150px;top:0;width:40px;height:106px;background:linear-gradient(90deg,#b0b0ac,#8c8c88 60%,#c8c8c4 85%,#e8e8e4)"></div>
  <div class="a" style="left:2px;top:46px;width:10px;height:5px;background:#d89878;border-radius:50%"></div>
  <div class="a" style="left:60px;top:75px;width:110px;height:40px;background:#1e1c1a;border-radius:30px 30px 0 0"></div>
  <div class="a" style="left:94px;top:40px;width:48px;height:56px;background:#d2c0b6;border-radius:40% 40% 45% 45%"></div>
  <div class="a" style="left:87px;top:24px;width:64px;height:22px;background:#2e2622;border-radius:50% 50% 25% 30%"></div>
  <div class="a" style="left:86px;top:32px;width:10px;height:24px;background:#2e2622;border-radius:40% 20% 50% 50%"></div>
  <div class="a" style="left:139px;top:30px;width:13px;height:40px;background:#2e2622;border-radius:30% 50% 50% 40%"></div>
  <div class="a" style="left:96px;top:64px;width:19px;height:10px;border:1px solid #e8e4e0;border-radius:40%"></div>
  <div class="a" style="left:118px;top:64px;width:19px;height:10px;border:1px solid #e8e4e0;border-radius:40%"></div>
  <div class="a" style="left:101px;top:68px;width:8px;height:2px;background:#5a4a44"></div>
  <div class="a" style="left:123px;top:68px;width:8px;height:2px;background:#5a4a44"></div>
  <div class="a" style="left:140px;top:62px;width:1px;height:44px;background:#d0d0d0"></div>
</div></div>
<div class="a" style="left:861px;top:286px;width:117px;height:26.5px;background:rgba(30,30,30,0.72);z-index:2"></div>
<svg class="a" style="left:866px;top:290px;z-index:3" width="17" height="18" viewBox="0 0 17 18"><rect x="5.5" y="1" width="6" height="10" rx="3" fill="#fff"/><path d="M3 8.5a5.5 5.5 0 0 0 11 0" fill="none" stroke="#fff" stroke-width="1.3"/><path d="M8.5 14v3M5.5 17h6" stroke="#fff" stroke-width="1.3"/><path d="M1.2 15.2L14.2 2.2" stroke="rgba(40,40,42,0.9)" stroke-width="2"/><path d="M2 16L15 3" stroke="#e0303a" stroke-width="1.6"/></svg>
<div class="t" style="left:890px;top:293px;font-size:13.4px;color:#fff;z-index:3">国际法 冯金宇</div>

<div class="tile" style="left:857px;top:325px;width:197.5px;height:111px"></div>
<div class="a" style="left:925.5px;top:342px;width:62px;height:62px;border-radius:50%;overflow:hidden;background:#3a2224"><div class="a" style="left:0;top:0;width:62px;height:62px;filter:blur(0.7px)">
  <div class="a" style="left:10px;top:8px;width:44px;height:30px;background:#241212;border-radius:50%"></div>
  <div class="a" style="left:9px;top:17px;width:38px;height:36px;background:#f4d8d6;border-radius:45% 45% 40% 40%"></div>
  <div class="a" style="left:12px;top:10px;width:10px;height:18px;background:#f0e4e4;border-radius:50%"></div>
  <div class="a" style="left:20px;top:9px;width:26px;height:14px;background:#241414;border-radius:40% 60% 30% 30%"></div>
  <div class="a" style="left:15px;top:26px;width:7px;height:9px;background:#2a1a1a;border-radius:50%"></div>
  <div class="a" style="left:33px;top:26px;width:7px;height:9px;background:#2a1a1a;border-radius:50%"></div>
  <div class="a" style="left:14px;top:35px;width:6px;height:3px;background:#f0a0a0;border-radius:50%"></div>
  <div class="a" style="left:35px;top:35px;width:6px;height:3px;background:#f0a0a0;border-radius:50%"></div>
  <div class="a" style="left:44px;top:28px;width:12px;height:16px;background:#e8b8b0;border-radius:50%"></div>
  <div class="a" style="left:5px;top:44px;width:22px;height:20px;background:#f6e0e0;border-radius:50%"></div>
  <div class="a" style="left:30px;top:46px;width:24px;height:20px;background:#f2dada;border-radius:50%"></div>
  <div class="a" style="left:7px;top:35px;width:12px;height:13px;background:#e03a30;border-radius:50%"></div>
  <div class="a" style="left:29px;top:37px;width:10px;height:12px;background:#d8402e;border-radius:50%"></div>
  <div class="a" style="left:9px;top:33px;width:8px;height:3px;background:#4a9a50;border-radius:50%"></div>
  <div class="a" style="left:30px;top:35px;width:8px;height:3px;background:#4a9a50;border-radius:50%"></div>
  <div class="a" style="left:44px;top:19px;width:9px;height:9px;background:#faf6f2;border-radius:50%"></div>
  <div class="a" style="left:40px;top:8px;width:7px;height:8px;background:#d83028;border-radius:50%"></div>
  <div class="a" style="left:35px;top:3px;width:8px;height:3px;background:#b08a70;transform:rotate(-25deg)"></div>
  <div class="a" style="left:2px;top:20px;width:4px;height:6px;background:#5a9a80;border-radius:50%"></div>
  <div class="a" style="left:24px;top:50px;width:14px;height:14px;background:#faf4f4"></div>
</div></div>
<div class="a" style="left:860.5px;top:407px;width:73.5px;height:27px;background:#131314;z-index:2"></div>
<svg class="a" style="left:866px;top:411px;z-index:3" width="17" height="18" viewBox="0 0 17 18"><rect x="5.5" y="1" width="6" height="10" rx="3" fill="#fff"/><path d="M3 8.5a5.5 5.5 0 0 0 11 0" fill="none" stroke="#fff" stroke-width="1.3"/><path d="M8.5 14v3M5.5 17h6" stroke="#fff" stroke-width="1.3"/><path d="M1.2 15.2L14.2 2.2" stroke="rgba(40,40,42,0.9)" stroke-width="2"/><path d="M2 16L15 3" stroke="#e0303a" stroke-width="1.6"/></svg>
<div class="t" style="left:890px;top:414px;font-size:13.4px;color:#fff;z-index:3">赵如彦</div>

<div class="tile" style="left:857px;top:445.5px;width:197.5px;height:111px"></div>
<div class="a" style="left:925.5px;top:462.5px;width:62px;height:62px;border-radius:50%;overflow:hidden;background:#5a1c1c"><div class="a" style="left:0;top:0;width:62px;height:62px;filter:blur(0.7px)">
  <div class="a" style="left:0;top:0;width:18px;height:62px;background:#7a2a24"></div>
  <div class="a" style="left:44px;top:0;width:18px;height:62px;background:#8a2a22"></div>
  <div class="a" style="left:0;top:42px;width:62px;height:22px;background:#4a4a7a"></div>
  <div class="a" style="left:0px;top:38px;width:50px;height:9px;background:#e0a096;transform:rotate(22deg)"></div>
  <div class="a" style="left:26px;top:46px;width:8px;height:16px;background:#d89890"></div>
  <div class="a" style="left:20px;top:12px;width:28px;height:26px;background:#f2dec6;border-radius:40%"></div>
  <div class="a" style="left:10px;top:4px;width:40px;height:16px;background:#b0703c;border-radius:50% 50% 20% 40%;transform:rotate(-15deg)"></div>
  <div class="a" style="left:12px;top:10px;width:10px;height:22px;background:#b0703c;border-radius:50%"></div>
  <div class="a" style="left:34px;top:8px;width:12px;height:8px;background:#b0703c;border-radius:50%"></div>
  <div class="a" style="left:37px;top:22px;width:6px;height:5px;background:#7a2a2a;border-radius:50%"></div>
  <div class="a" style="left:27px;top:24px;width:16px;height:13px;background:#fafafa;border-radius:50%"></div>
  <div class="a" style="left:40px;top:18px;width:14px;height:8px;border:1.5px solid #f4f4f4;border-radius:50%"></div>
  <div class="a" style="left:46px;top:44px;width:8px;height:12px;background:#d070b0;transform:rotate(20deg)"></div>
  <div class="a" style="left:2px;top:48px;width:8px;height:12px;background:#e8e8f0"></div>
</div></div>
<div class="a" style="left:860.5px;top:527.5px;width:73.5px;height:27px;background:#131314;z-index:2"></div>
<svg class="a" style="left:866px;top:531px;z-index:3" width="17" height="18" viewBox="0 0 17 18"><rect x="5.5" y="1" width="6" height="10" rx="3" fill="#fff"/><path d="M3 8.5a5.5 5.5 0 0 0 11 0" fill="none" stroke="#fff" stroke-width="1.3"/><path d="M8.5 14v3M5.5 17h6" stroke="#fff" stroke-width="1.3"/><path d="M1.2 15.2L14.2 2.2" stroke="rgba(40,40,42,0.9)" stroke-width="2"/><path d="M2 16L15 3" stroke="#e0303a" stroke-width="1.6"/></svg>
<div class="t" style="left:890px;top:535px;font-size:13.4px;color:#fff;z-index:3">宋百章</div>

<div class="tile" style="left:857px;top:566px;width:197.5px;height:111px"></div>
<div class="a" style="left:925.5px;top:583px;width:62px;height:62px;border-radius:50%;overflow:hidden;background:#8c9298"><div class="a" style="left:0;top:0;width:62px;height:62px;filter:blur(1px)">
  <div class="a" style="left:0;top:3px;width:62px;height:5px;background:#a8aeb4"></div>
  <div class="a" style="left:18px;top:9px;width:10px;height:4px;background:#e8a058"></div>
  <div class="a" style="left:34px;top:8px;width:24px;height:3px;background:#e09858"></div>
  <div class="a" style="left:40px;top:14px;width:14px;height:4px;background:#e8a860"></div>
  <div class="a" style="left:8px;top:14px;width:10px;height:3px;background:#d89060"></div>
  <div class="a" style="left:6px;top:20px;width:12px;height:3px;background:#d88a70"></div>
  <div class="a" style="left:20px;top:10px;width:16px;height:12px;background:#e8e4ec;border-radius:50% 50% 30% 30%"></div>
  <div class="a" style="left:26px;top:18px;width:12px;height:10px;background:#5a2a20;border-radius:40%"></div>
  <div class="a" style="left:12px;top:20px;width:6px;height:8px;background:#e0909a"></div>
</div></div>
<!-- toast -->
<div class="a" style="left:784px;top:543px;width:300px;height:43.5px;background:#3a3c40;border-radius:5px;z-index:20;box-shadow:0 0 2px rgba(0,0,0,0.3)"></div>
<svg class="a" style="left:797px;top:554.5px;z-index:21" width="18" height="19" viewBox="0 0 17 18"><rect x="5.5" y="1" width="6" height="10" rx="3" fill="#8a8c90"/><path d="M3 8.5a5.5 5.5 0 0 0 11 0" fill="none" stroke="#8a8c90" stroke-width="1.3"/><path d="M8.5 14v3M5.5 17h6" stroke="#8a8c90" stroke-width="1.3"/><path d="M2 16L15 3" stroke="#d0303a" stroke-width="1.5"/></svg>
<div class="a" style="left:827.5px;top:548px;width:1px;height:34px;background:#2a2c30;z-index:21"></div>
<div class="t" style="left:837px;top:558px;font-size:14.5px;color:#f0f0f0;z-index:21">正在讲话: 王钊;</div>
<svg class="a" style="left:966px;top:546px;z-index:21" width="66" height="36" viewBox="0 0 66 36"><defs><linearGradient id="lg1" x1="0" y1="1" x2="1" y2="0"><stop offset="0" stop-color="#45474b"/><stop offset="1" stop-color="#56585c"/></linearGradient><linearGradient id="lg2" x1="0" y1="1" x2="1" y2="0"><stop offset="0" stop-color="#4e5054"/><stop offset="1" stop-color="#5a5c60"/></linearGradient></defs><path d="M6 20l13-14q2-2 4 0l11 11-14 15q-2 2-4 0l-10-9q-2-1.5 0-3z" fill="url(#lg1)"/><path d="M26 19l15-14q2-2 4 0l16 14q2 1.5 0 3l-14 10q-2 2-4 0z" fill="url(#lg2)"/></svg>

<!-- right white strip -->
<div class="a" style="left:1076px;top:-5px;width:10px;height:73px;border:1px solid #dfe1e5;border-radius:3px;background:#fff"></div>
<div class="a" style="left:1077px;top:85px;width:4px;height:1.2px;background:#5a8ee8"></div>
<div class="a" style="left:1078px;top:92px;width:3px;height:1.2px;background:#5a8ee8"></div>
<div class="a" style="left:1077px;top:98px;width:4px;height:1.2px;background:#5a8ee8"></div>
<div class="a" style="left:1076px;top:114px;width:10px;height:193px;border:1px solid #dfe1e5;border-radius:3px;background:#fff"></div>
<div class="a" style="left:1077px;top:204px;width:4px;height:1.5px;background:#5a8ee8"></div>
<div class="a" style="left:1078px;top:209px;width:3px;height:1.5px;background:#5a8ee8"></div>
<div class="a" style="left:1077px;top:216px;width:4px;height:1.5px;background:#5a8ee8"></div>
<div class="a" style="left:1076px;top:233px;width:10px;height:73px;border:1px solid #dfe1e5;border-radius:3px;background:#fff"></div>
<div class="a" style="left:1077px;top:324px;width:4px;height:1.5px;background:#5a8ee8"></div>
<div class="a" style="left:1078px;top:330px;width:3px;height:1.5px;background:#5a8ee8"></div>
<div class="a" style="left:1077px;top:336px;width:4px;height:1.5px;background:#5a8ee8"></div>
<div class="a" style="left:1076px;top:352px;width:10px;height:103px;border:1px solid #dfe1e5;border-radius:3px;background:#fff"></div>
<div class="a" style="left:1064px;top:464px;width:16px;height:142px;background:#fff"></div>
<div class="a" style="left:1079px;top:488px;width:1px;height:1px;background:#999"></div>
<div class="a" style="left:1078px;top:503px;width:2px;height:1px;background:#aaa"></div>
<div class="a" style="left:1079px;top:506px;width:1px;height:7px;background:#aaa"></div>
</body></html>
